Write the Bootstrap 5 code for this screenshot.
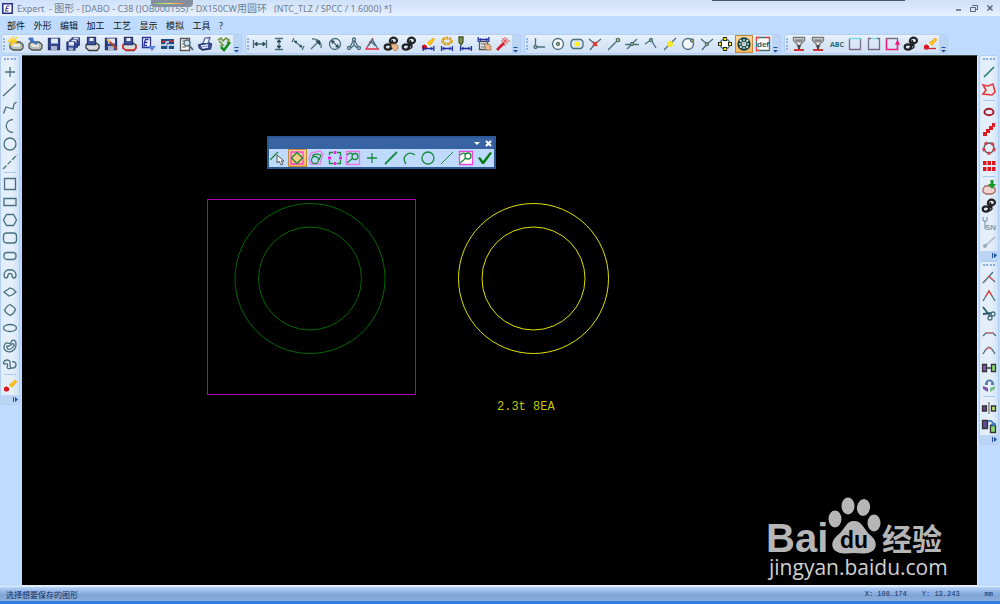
<!DOCTYPE html>
<html lang="zh-CN">
<head>
<meta charset="utf-8">
<meta name="viewport" content="width=device-width, initial-scale=1">
<title>Expert - 图形</title>
<link href="https://cdn.jsdelivr.net/npm/bootstrap@5.3.0/dist/css/bootstrap.min.css" rel="stylesheet">
<style>
  body { font-family: "Noto Sans", "Noto Sans CJK SC", sans-serif; font-size: 9px; line-height: 12px; background: #bfdbff; overflow: hidden; }
  button { border: 0; background: none; padding: 0; color: inherit; }
  .titlebar { height: 16px; font-size: 9px; line-height: 16px; color: #6f7f92; padding-left: 2px; gap: 4px; background: linear-gradient(#cfe1f9, #d9e8fc 50%, #e7f1fe); }
  .titlebar b { font-weight: 400; font-size: 10px; }
  .app-icon { width: 11px; height: 11px; }
  .recorder { left: 151px; top: 0; width: 42px; height: 7px; background: #84909c; border-radius: 0 0 4px 4px; }
  .recorder i { display: block; height: 1px; margin: 3px 10px 0 4px; background: linear-gradient(90deg, #6fdc6c, #ece46e, #f8784c); }
  .edge { right: 95px; top: 0; width: 193px; height: 1px; background: #4c5566; }
  .win-btn { width: 12px; height: 14px; }
  .win-btn svg { width: 8px; height: 8px; display: block; margin: auto; fill: none; stroke: #56657a; }
  .menus { height: 18px; margin-left: 7px; width: 230px; }
  .menus a { color: #101820; font-size: 9px; line-height: 20px; min-width: 18px; text-decoration: none; white-space: nowrap; }
  .bars { height: 21px; padding: 0 0 1px 1px; gap: 3px; }
  .strip { display: flex; border: 1px solid #b4cff2; border-radius: 3px; background: linear-gradient(#e9f2fc, #d8e6f7 50%, #d3e2f6); }
  .strip.horiz { height: 20px; }
  .strip.vert { flex-direction: column; background: linear-gradient(90deg, #e2edfb, #e6f0fa 60%, #cde3f8); width: 20px; }
  .grip { flex: none; }
  .horiz > .grip { width: 4px; margin: 3px 0 3px 1px; border-left: 2px dotted #8fb3e4; }
  .vert > .grip { height: 5px; margin: 2px 3px 0; border-top: 2px dotted #86aae0; }
  .cap { flex: none; background: #bdd5f5; color: #1e4f9a; display: flex; align-items: end; justify-content: center; }
  .horiz > .cap { width: 8px; }
  .vert > .cap { height: 9px; align-items: center; justify-content: end; }
  .cap svg { width: 7px; height: 7px; fill: currentColor; stroke: currentColor; stroke-width: 1; }
  .split { height: 1px; margin: 1px 3px 2px; background: #a9c9f5; }
  .tool { flex: 1 1 0; min-width: 0; display: flex; align-items: center; justify-content: center; }
  .vert .tool { flex: none; height: 18px; }
  .tool svg { flex: none; width: 16px; height: 16px; fill: none; stroke: #4a7080; stroke-width: 1.3; }
  .tool.picked { background: linear-gradient(#fbd9a0, #f7b757); box-shadow: inset 0 0 0 1px #c08a3e; }
  .w1 { width: 241px; } .w2 { width: 276px; } .w3 { width: 257px; } .w4 { width: 164px; }
  .canvas { background: #000; border-top: 1px solid #444a44; border-right: 1px solid #e8ecef; border-bottom: 1px solid #e8ecef; margin: 0 1px 0 2px; }
  .right-dock { margin-right: 1px; }
  .drawing { left: 0; top: 0; width: 600px; height: 400px; }
  .drawing text { font: 12px "Liberation Mono", monospace; fill: #c4c400; }
  .palette { left: 245px; top: 80px; width: 229px; border: 2px solid #2d5896; background: #bfdaff; }
  .palette-head { height: 11px; background: #3763a3; gap: 4px; padding-right: 2px; }
  .palette-head svg { width: 7px; height: 7px; display: block; fill: #fff; stroke: #fff; stroke-width: 0; }
  .palette .tool { height: 18px; }
  .palette .tool svg { stroke: #1c8a3c; }
  .watermark { right: 22px; bottom: 2px; width: 190px; height: 92px; fill: #b6b6b6; }
  .logo-latin { font: bold 40px "Liberation Sans", sans-serif; }
  .logo-du { font: bold 23px "Liberation Sans", sans-serif; fill: #000; }
  .logo-cjk { font: bold 30px "Noto Sans CJK SC", sans-serif; }
  .logo-url { font: 21px "Open Sans", sans-serif; fill: #d0d0d0; }
  .status { height: 18px; border-bottom: 3px solid #327de0; border-top: 1px solid #dcecff; background: linear-gradient(#b7d3f8, #8cb1e3 40%, #7fa4d4 60%, #8db0dd); font-size: 8px; line-height: 15px; color: #0f2f6b; padding: 0 7px 0 6px; }
  .readout { font: 7px/15px "Liberation Mono", monospace; gap: 15px; }
  .unit { padding-left: 10px; }
</style>
</head>
<body class="d-flex flex-column vh-100">

<svg width="0" height="0" class="position-absolute" aria-hidden="true">
  <symbol id="gears" viewBox="0 0 16 16"><g fill="none" stroke="#222"><ellipse cx="10.500" cy="4.500" rx="3.500" ry="2.800" stroke-width="2.200"/><ellipse cx="5" cy="11" rx="3.300" ry="2.600" stroke-width="2.200"/><path d="M6 5l4 5M9 4l2 5M6 12c6 2 6-3 3-4" stroke-width="1.500"/></g></symbol>
  <symbol id="disk" viewBox="0 0 16 16"><path d="M2.500 2.500h11v11h-11z" fill="#32468f" stroke="#24336f"/><path d="M5 2.500h7v5H5z" fill="#dfe7f5" stroke="none"/><path d="M5 10h6v4H5z" fill="#a9b4c7" stroke="none"/></symbol>
  <symbol id="box" viewBox="0 0 16 16"><path d="M2 8l2-2h8l3 2.500V12l-2 2H5l-3-2z" fill="#b9bdba" stroke="#4e5554"/><path d="M4 8h8v3H5z" fill="#e3e5da" stroke="none"/></symbol>
  <symbol id="part" viewBox="0 0 16 16"><path d="M2 9l2-2h8l3 2v3l-2 2.500H5L2 12z" fill="#d9ddd9" stroke="#343b3f"/><path d="M3.500 1.500h8v7h-8z" fill="#43569c" stroke="#28376f"/><path d="M5.500 2h4v3h-4z" fill="#eee" stroke="none"/></symbol>
  <symbol id="dim" viewBox="0 0 16 6"><path d="M1.500 0v6M14.500 0v6M3 3h10" stroke="#1f2fa0" stroke-width="1.600" fill="none"/><path d="M2 3l3-2v4zM14 3l-3-2v4z" fill="#1f2fa0" stroke="none"/></symbol>
  <symbol id="eraser" viewBox="0 0 16 16"><path d="M6 8l7-6 2 1.500-6 7z" fill="#ffc21a" stroke="#e79a12" stroke-width=".6"/><path d="M5.500 7.500l4 3.500" stroke="#fff" stroke-width="2"/><circle cx="4.500" cy="11" r="2.600" fill="#e0151c" stroke="none"/></symbol>
  <symbol id="nozzle" viewBox="0 0 16 16"><path d="M2.500 1.500h11v3l-4 4v2h-3v-2l-4-4z" fill="#e4e4e4" stroke="#777"/><path d="M4 4h8M5 5.500h6" stroke="#888"/><path d="M8 9v4" stroke="#444" stroke-width="2"/><path d="M3 14h10" stroke="#d42020" stroke-width="1.800"/></symbol>
  <symbol id="more-h" viewBox="0 0 7 7"><path d="M1.500 1.500h4"/><path d="M1 4h5L3.500 6.500z" stroke="none"/></symbol>
  <symbol id="more-v" viewBox="0 0 7 7"><path d="M1.500 1v5"/><path d="M3 1l3 2.500L3 6z" stroke="none"/></symbol>
</svg>

<header>
  <div class="titlebar d-flex align-items-center position-relative">
    <svg class="app-icon" viewBox="0 0 11 11"><path d="M.8.800h9.400v9.400H.8z" fill="#fff" stroke="#252e80" stroke-width="1.500"/><path d="M7.500 3H5L4 5.500h2.500M4 5.500L3.500 8h3" fill="none" stroke="#3f3da0"/></svg>
    <span class="flex-grow-1 text-nowrap">Expert &nbsp;- <b>图形</b> - [DABO - C38 (JOB000155) - DX150CW<b>用圆环</b> &nbsp;&nbsp;(NTC_TLZ / SPCC / 1.6000) *]</span>
    <button class="win-btn" aria-label="最小化"><svg viewBox="0 0 8 8"><path d="M2 6h5" stroke-width="1.500"/></svg></button>
    <button class="win-btn" aria-label="还原"><svg viewBox="0 0 8 8"><path d="M2.500 2V1.500h5v4H6M.5 3.500h5v4h-5z"/></svg></button>
    <button class="win-btn me-1" aria-label="关闭"><svg viewBox="0 0 8 8"><path d="M1.500 1.500l5 5m0-5l-5 5" stroke-width="1.500"/></svg></button>
    <div class="recorder position-absolute"><i></i></div>
    <div class="edge position-absolute"></div>
  </div>
  <nav class="menus d-flex justify-content-between" aria-label="菜单">
    <a href="#">部件</a><a href="#">外形</a><a href="#">编辑</a><a href="#">加工</a><a href="#">工艺</a><a href="#">显示</a><a href="#">模拟</a><a href="#">工具</a><a href="#">?</a>
  </nav>
  <div class="bars d-flex">
    <div class="strip horiz w1" role="toolbar" aria-label="文件">
      <span class="grip"></span>
      <button class="tool" aria-label="新建"><svg><use href="#box"/><path d="M1 2l8 6M9 1L2 9M5 0v9M0 5h9" stroke="#ffd21e"/></svg></button>
      <button class="tool" aria-label="打开"><svg><use href="#box"/><path d="M2 2l2 2 2-2M4 4l6 4" stroke="#3b74c4" stroke-width="2.500"/></svg></button>
      <button class="tool" aria-label="保存"><svg><use href="#disk"/></svg></button>
      <button class="tool" aria-label="全部保存"><svg><g transform="translate(5 0) scale(.7)"><use href="#disk" width="16" height="16"/></g><g transform="translate(3 2) scale(.7)"><use href="#disk" width="16" height="16"/></g><g transform="translate(0 4) scale(.75)"><use href="#disk" width="16" height="16"/></g></svg></button>
      <button class="tool" aria-label="保存部件"><svg><use href="#part"/></svg></button>
      <button class="tool" aria-label="保存图形"><svg><use href="#disk"/><path d="M5 4l9 9" stroke="#b5462a" stroke-width="2"/><path d="M4 3l3 3" stroke="#f2c25c" stroke-width="2"/></svg></button>
      <button class="tool" aria-label="另存部件"><svg><use href="#part"/><path d="M2 8v4l3 2h8l2-2V9" stroke="#e63232" stroke-width="1.500"/></svg></button>
      <button class="tool" aria-label="转换"><svg><path d="M2.500 1.500h8v10h-8z" fill="#f3f6ff" stroke="#27359a"/><path d="M8.500 3.500h-3l-1 3h3m-3 0l-.5 3h3" stroke="#27359a"/><path d="M8 10h8l-4 5z" fill="#5d83d8" stroke="none"/></svg></button>
      <button class="tool" aria-label="排版"><svg><path d="M2 3h13v10H2z" fill="#1d4f86" stroke="none"/><path d="M2 9h5V6h3M9 13V9h6" stroke="#e8f0fa"/><path d="M3 5.500h4M10 5h5" stroke="#e02a2a" stroke-width="1.500"/></svg></button>
      <button class="tool" aria-label="预览"><svg><path d="M2.500 2.500h9v12h-9z" fill="#fff" stroke="#555"/><path d="M4 5h3M4 8h2M4 11h4" stroke="#999"/><circle cx="9" cy="7" r="3" fill="#cfe4ee" stroke="#586e7a"/><path d="M11 9l4 5" stroke="#586e7a" stroke-width="2"/></svg></button>
      <button class="tool" aria-label="打印"><svg><path d="M1.500 9l9-3 4 2-1 5-8 1-3-2z" fill="#455796" stroke="#27346c"/><path d="M6 7l2-5 5-.5L11 7" fill="#eef3fc" stroke="#5a6aa6"/><path d="M4 10l7-1M5 12l6-1" stroke="#dbe4f6"/></svg></button>
      <button class="tool" aria-label="检查"><svg><path d="M2 4l3-2 2 3 3-3 3 2-2 3M3 5l4 4-3 1" stroke="#71943d" stroke-width="1.600"/><path d="M5 11l3 3 6-8" stroke="#168c1c" stroke-width="2.500"/></svg></button>
      <button class="cap" aria-label="更多"><svg><use href="#more-h"/></svg></button>
    </div>
    <div class="strip horiz w2" role="toolbar" aria-label="尺寸">
      <span class="grip"></span>
      <button class="tool" aria-label="水平尺寸"><svg><path d="M1.500 4v8M14.500 4v8M3 8h10"/><path d="M5 6v4L2.500 8zM11 6v4l2.500-2z" fill="#274754" stroke="#274754" stroke-width=".8"/></svg></button>
      <button class="tool" aria-label="垂直尺寸"><svg><path d="M4 2.500h8M4 13.500h8M8 4v8"/><path d="M6 6h4L8 3.500zM6 10h4l-2 2.500z" fill="#274754" stroke="#274754" stroke-width=".8"/></svg></button>
      <button class="tool" aria-label="平行尺寸"><svg><path d="M4 2L2 6M14 10l-2 4M4 5l8 6"/><path d="M4 4.500l3.500.5-2 2.500zM12.500 11.500L9 11l2-2.500z" fill="#274754" stroke="none"/></svg></button>
      <button class="tool" aria-label="半径"><svg><path d="M4 3c6-1 10 4 9 9M3 13l8-8"/><path d="M7 4.500h5v5z" fill="#274754" stroke="none"/></svg></button>
      <button class="tool" aria-label="直径"><svg><circle cx="8" cy="8" r="5.500"/><path d="M5 5l6 6"/><path d="M4 4l4 1-3 3zM12 12l-1-4-3 3z" fill="#274754" stroke="none"/></svg></button>
      <button class="tool" aria-label="圆弧尺寸"><svg><circle cx="8" cy="3.500" r="1.500"/><circle cx="3" cy="12" r="1.500"/><circle cx="13" cy="12" r="1.500"/><path d="M8 5v4M7 5L4 11M9 5l3 6M5 12l3-3 3 3"/></svg></button>
      <button class="tool" aria-label="角度"><svg><path d="M8 3l6 10M5 6c3 0 5 1 6 4"/><path d="M9 2L2 13h13" stroke="#e33046"/><path d="M4 10L9 3"/></svg></button>
      <button class="tool" aria-label="拾取属性"><svg><use href="#gears"/><path d="M8 8h5l2 2v3l-3 2-3-3z" fill="#e9b98c" stroke="#9b6a43" stroke-width=".7"/></svg></button>
      <button class="tool" aria-label="属性"><svg><use href="#gears"/></svg></button>
      <button class="tool" aria-label="删除尺寸"><svg><use href="#eraser"/><use href="#dim" x="2" y="10" width="13" height="5"/></svg></button>
      <button class="tool" aria-label="尺寸设置"><svg><ellipse cx="8" cy="5" rx="4.500" ry="3" stroke="#dba21d" stroke-width="2.800" stroke-dasharray="2.500 .7"/><use href="#dim" x="1" y="10" width="14" height="5"/></svg></button>
      <button class="tool" aria-label="编辑尺寸"><svg><path d="M2 1h4v5L4 9 2 6z" fill="#7b9848" stroke="#46552f"/><use href="#dim" x="2" y="10" width="14" height="5"/></svg></button>
      <button class="tool" aria-label="移动尺寸"><svg><path d="M3.500 5.500h8v8h-8z" fill="#eee" stroke="#555"/><path d="M5 8h5M5 11h5" stroke-width="1"/><use href="#dim" x="1" y="1" width="13" height="5"/><path d="M8 8h5l2 2v4h-5z" fill="#e9b98c" stroke="#9b6a43" stroke-width=".7"/></svg></button>
      <button class="tool" aria-label="自动尺寸"><svg><path d="M2 14L9 7" stroke="#d51c2a" stroke-width="2.600"/><path d="M10 1v9M6 5h9M7 2l6 6M13 2L8 7" stroke="#ef5454" stroke-width="1"/></svg></button>
      <button class="cap" aria-label="更多"><svg><use href="#more-h"/></svg></button>
    </div>
    <div class="strip horiz w3" role="toolbar" aria-label="捕捉">
      <span class="grip"></span>
      <button class="tool" aria-label="原点"><svg><path d="M4.500 2v9H14"/><circle cx="4.500" cy="11" r="1.500" fill="#d9d33a"/></svg></button>
      <button class="tool" aria-label="圆心"><svg><circle cx="8" cy="8" r="5.500" fill="#f4f7f8"/><circle cx="8" cy="8" r="1.500" fill="#d9d33a"/></svg></button>
      <button class="tool" aria-label="中心"><svg><path d="M4 3.500h8l2 2v5l-2 2H4l-2-2v-5z"/><circle cx="8" cy="8" r="2.500" fill="#ffee22" stroke="none"/></svg></button>
      <button class="tool" aria-label="交点"><svg><path d="M2 3l6 5 6-5M8 8l-5 6"/><path d="M6 6l4 4M10 6l-4 4" stroke="#dc3328" stroke-width="1.800"/></svg></button>
      <button class="tool" aria-label="端点"><svg><path d="M2 14L12 4"/><circle cx="12" cy="4" r="1.700" fill="#d9d33a"/></svg></button>
      <button class="tool" aria-label="最近点"><svg><path d="M3 13L13 3M1 8.500h14"/><circle cx="8" cy="8" r="1.500" fill="#d9d33a"/></svg></button>
      <button class="tool" aria-label="顶点"><svg><path d="M2 8l6-4 5 8"/><circle cx="8" cy="4" r="1.500" fill="#d9d33a"/></svg></button>
      <button class="tool" aria-label="中点"><svg><path d="M2 14L14 2"/><circle cx="8" cy="8" r="3" fill="#f5e62c" stroke="none"/></svg></button>
      <button class="tool" aria-label="象限点"><svg><circle cx="8" cy="8" r="5.500" fill="#f4f7f8"/><circle cx="12" cy="4.500" r="1.500" fill="#d9d33a"/></svg></button>
      <button class="tool" aria-label="切点"><svg><path d="M2 3l6 5 6-5M8 8l-5 6"/><circle cx="8" cy="8" r="1.500" fill="#d9d33a"/></svg></button>
      <button class="tool" aria-label="四分点"><svg><circle cx="8" cy="8" r="5" fill="#fff"/><path d="M8 1v4M8 11v4M1 8h4M11 8h4" stroke="#222" stroke-width="4"/><path d="M8 2v2M8 12v2M2 8h2M12 8h2" stroke="#ffe600" stroke-width="2.500"/></svg></button>
      <button class="tool picked" aria-label="自动捕捉"><svg><circle cx="8" cy="8" r="6" fill="#1d4d52" stroke="#163c43"/><path d="M4 4l8 8M12 4l-8 8" stroke="#dfe8dd" stroke-width="2" stroke-dasharray="2 1"/><path d="M8 3v2M8 11v2M3 8h2M11 8h2" stroke="#8db3ac" stroke-width="2"/></svg></button>
      <button class="tool" aria-label="默认"><svg><path d="M1.500 1.500h13v13h-13z" fill="#fff" stroke="#496e70"/><path d="M1.500 5V1.500H5M11 1.500h3.500V5M1.500 11v3.500H5" stroke="#ef4f4f"/><text x="2" y="11" font-family="Liberation Sans, sans-serif" font-size="8" font-weight="bold" fill="#255c60" stroke="none">def</text></svg></button>
      <button class="cap" aria-label="更多"><svg><use href="#more-h"/></svg></button>
    </div>
    <div class="strip horiz w4" role="toolbar" aria-label="加工">
      <span class="grip"></span>
      <button class="tool" aria-label="切割"><svg><use href="#nozzle"/></svg></button>
      <button class="tool" aria-label="单点切割"><svg><use href="#nozzle"/></svg></button>
      <button class="tool" aria-label="文字"><svg><text x="1" y="11" font-family="Open Sans, sans-serif" font-size="7" font-weight="bold" fill="#276a74" stroke="none">ABC</text></svg></button>
      <button class="tool" aria-label="闭合轮廓"><svg><path d="M2.500 2.500v11h11v-11" stroke="#756c86"/><path d="M2 2.500h12" stroke="#69d9e5"/></svg></button>
      <button class="tool" aria-label="开口轮廓"><svg><path d="M5 2.500H2.500v11h11v-11H11" stroke="#756c86"/><path d="M5 2.500h6" stroke="#69d9e5"/></svg></button>
      <button class="tool" aria-label="引入线"><svg><path d="M2.500 2.500v11h11v-7" stroke="#f01c83" stroke-width="1.600"/><path d="M2 2.500h11.500V6" stroke="#756c86"/><path d="M12 8l1.500-3L15 8z" fill="#f01c83" stroke="#f01c83"/></svg></button>
      <button class="tool" aria-label="参数"><svg><use href="#gears"/></svg></button>
      <button class="tool" aria-label="删除加工"><svg><use href="#eraser"/><path d="M2 12.500h12" stroke="#d22b34"/></svg></button>
      <button class="cap" aria-label="更多"><svg><use href="#more-h"/></svg></button>
    </div>
  </div>
</header>

<main class="d-flex flex-grow-1 overflow-hidden">
  <aside>
    <div class="strip vert" role="toolbar" aria-label="绘图">
      <span class="grip"></span>
      <button class="tool" aria-label="点"><svg><path d="M8 3v10M3 8h10"/></svg></button>
      <button class="tool" aria-label="直线"><svg><path d="M1 14L14 2"/></svg></button>
      <button class="tool" aria-label="折线"><svg><path d="M1.500 13.500L4 7l7 2 1-5 2.500-2"/></svg></button>
      <button class="tool" aria-label="圆弧"><svg><path d="M11 1.500c-9 1-9 12 0 13"/></svg></button>
      <button class="tool" aria-label="圆"><svg><circle cx="8" cy="8" r="6"/></svg></button>
      <button class="tool" aria-label="构造线"><svg><path d="M1 15L15 1" stroke-dasharray="5 1.500"/></svg></button>
      <div class="split"></div>
      <button class="tool" aria-label="正方形"><svg><path d="M2.500 2.500h11v11h-11z"/></svg></button>
      <button class="tool" aria-label="矩形"><svg><path d="M2 4.500h12v7H2z"/></svg></button>
      <button class="tool" aria-label="六边形"><svg><path d="M4.500 2.500h7l3 5.500-3 5.500h-7L1.500 8z"/></svg></button>
      <button class="tool" aria-label="圆角矩形"><svg><rect x="1.500" y="3" width="13" height="10" rx="3"/></svg></button>
      <button class="tool" aria-label="键槽"><svg><rect x="2" y="4.500" width="12" height="7" rx="3"/></svg></button>
      <button class="tool" aria-label="弧形槽"><svg><path d="M2 9c0-7 12-7 12 0 0 4-4 4-4 0 0-2-4-2-4 0 0 4-4 4-4 0z"/></svg></button>
      <button class="tool" aria-label="菱形"><svg><path d="M2 8l6-4 3 1 3 3-4 3-3 1z"/></svg></button>
      <button class="tool" aria-label="圆孔"><svg><path d="M8 2.500c1 1 1 1 3 2 2 1 2 2 2.500 3.500-1 1-1 1-2 3-1 1-2 2-3.500 2.500-1-1-1-1-3-2-1-1-2-2-2.500-3.500 1-1 1-1 2-3 1-1 2-2 3.500-2.500z"/></svg></button>
      <button class="tool" aria-label="椭圆"><svg><ellipse cx="8" cy="8" rx="6.500" ry="3.500"/></svg></button>
      <button class="tool" aria-label="轮廓"><svg><path d="M3 6c2-3 3 1 6-1 0-4 5-4 5 1 0 7-7 10-11 6-2-2-1-4 0-6z"/><path d="M5 8c2 1 3 0 5-2 2-1 3 1 1 3-2 3-5 3-6 1z"/></svg></button>
      <button class="tool" aria-label="样条"><svg><path d="M3 8c-3 0-1-4 2-4 4 0 3 3 3 5 0 5 6 3 6 0 0-2-1-4-4-3M3 8c3-1 3 1 2 3 0 2 3 2 4 1"/></svg></button>
      <div class="split"></div>
      <button class="tool" aria-label="擦除"><svg><use href="#eraser"/></svg></button>
      <button class="cap" aria-label="更多"><svg><use href="#more-v"/></svg></button>
    </div>
  </aside>

  <section class="canvas flex-grow-1 position-relative overflow-hidden" aria-label="图形">
    <svg class="drawing position-absolute">
      <rect x="185.500" y="143.500" width="208" height="195" fill="none" stroke="#b000b0"/>
      <g fill="none" stroke="#006a00"><circle cx="288" cy="222.500" r="75"/><circle cx="288" cy="222.500" r="51.500"/></g>
      <g fill="none" stroke="#e0e000"><circle cx="511.500" cy="222.500" r="75"/><circle cx="511.500" cy="222.500" r="51.500"/></g>
      <text x="475" y="354">2.3t 8EA</text>
    </svg>

    <div class="palette position-absolute" role="toolbar" aria-label="选择">
      <div class="palette-head d-flex align-items-center justify-content-end">
        <button aria-label="选项"><svg viewBox="0 0 7 7"><path d="M0 2h6L3 5z"/></svg></button>
        <button aria-label="关闭"><svg viewBox="0 0 7 7"><path d="M1 1l5 5m0-5L1 6" stroke-width="2"/></svg></button>
      </div>
      <div class="d-flex">
        <button class="tool" aria-label="选择线"><svg><path d="M0 10L8 2"/><path d="M7 5v8l2-2 2 4 2-1-2-3h3z" fill="#fff" stroke="#555" stroke-width="1"/></svg></button>
        <button class="tool picked" aria-label="窗口选择"><svg><path d="M2 2h12v12H2z" stroke="#f044d8"/><path d="M8 2.500L13.500 8 8 13.500 2.500 8z" fill="#f9cd85"/></svg></button>
        <button class="tool" aria-label="多边形选择"><svg><path d="M3 3l9-2 3 3-3 10H3L1 9z" stroke="#e67de8"/><circle cx="7" cy="10" r="3.500"/><path d="M4 6c3-3 6-2 9-1l-2 5"/></svg></button>
        <button class="tool" aria-label="交叉选择"><svg><path d="M2.500 5V2.500H6M10 2.500h3.500V6M13.500 10v3.500H10M6 13.500H2.500V10"/><path d="M8 1v3M8 12v3M1 8h3M12 8h3" stroke="#ee24de" stroke-width="2.800"/></svg></button>
        <button class="tool" aria-label="框选圆"><svg><path d="M1.500 1.500h13v13h-13z" stroke="#ea78e9"/><circle cx="10" cy="6.500" r="3"/><path d="M2 13l6-5M2 5c3-3 5-2 6 0"/></svg></button>
        <button class="tool" aria-label="选择点"><svg><path d="M8 3v10M3 8h10"/></svg></button>
        <button class="tool" aria-label="选择直线"><svg><path d="M2 14L14 2" stroke-width="1.800"/></svg></button>
        <button class="tool" aria-label="选择圆弧"><svg><path d="M4 14C-1 7 6 0 13 5"/></svg></button>
        <button class="tool" aria-label="选择圆"><svg><circle cx="8" cy="8" r="6"/></svg></button>
        <button class="tool" aria-label="选择构造线"><svg><path d="M2 14L14 2" stroke-width="1"/></svg></button>
        <button class="tool" aria-label="全选"><svg><path d="M1.500 1.500h13v13h-13z" fill="#fff" stroke="#ee44e0"/><circle cx="10" cy="6" r="3"/><path d="M2 13l6-5M2 5c3-3 5-2 6 0"/></svg></button>
        <button class="tool" aria-label="确定"><svg><path d="M1 8l2-1 3 4 7-9 2 1L7 14H5z" fill="#047d16" stroke="none"/></svg></button>
      </div>
    </div>

    <svg class="watermark position-absolute" role="img" aria-label="Baidu 经验">
      <text class="logo-latin" x="1" y="61">Bai</text>
      <ellipse cx="70" cy="28" rx="6.500" ry="8.500"/><ellipse cx="83" cy="15" rx="6.500" ry="8.500"/><ellipse cx="98.500" cy="16.500" rx="6.500" ry="8.500" transform="rotate(10 98.500 16.500)"/><ellipse cx="109" cy="32" rx="6.500" ry="8.500"/>
      <path d="M89 30c8 0 10 8 15 13 6 5 8 9 6 14-3 6-11 6-21 5-9 1-18 1-21-5-2-5 0-9 6-14 6-5 7-13 15-13z"/>
      <text class="logo-du" x="75" y="57">du</text>
      <text class="logo-cjk" x="117" y="59">经验</text>
      <text class="logo-url" x="4" y="84">jingyan.baidu.com</text>
    </svg>
  </section>

  <aside class="right-dock">
    <div class="strip vert" role="toolbar" aria-label="阵列">
      <span class="grip"></span>
      <button class="tool" aria-label="参考线"><svg><path d="M3 13L13 3" stroke="#267a70" stroke-width="1.600"/></svg></button>
      <button class="tool" aria-label="板材"><svg><path d="M2 3l5 1 5-2 2 8-3 3-9-1 3-4z" fill="#ece9ea" stroke="#df3a42" stroke-width="1.600"/></svg></button>
      <div class="split"></div>
      <button class="tool" aria-label="椭圆孔"><svg><ellipse cx="8" cy="8" rx="4.500" ry="3.200" stroke="#a61d2a" stroke-width="2"/></svg></button>
      <button class="tool" aria-label="斜向阵列"><svg><path d="M2 12h4M5 9h4M8 6h4M11 3h3" stroke="#e01b24" stroke-width="4"/></svg></button>
      <button class="tool" aria-label="圆周阵列"><svg><circle cx="8" cy="8" r="5" stroke="#555"/><circle cx="8" cy="8" r="5.300" stroke="#cf4550" stroke-width="3" stroke-dasharray="3 3.600"/></svg></button>
      <button class="tool" aria-label="矩形阵列"><svg><path d="M2 5h3.500M6.500 5H10M11 5h3.500M2 11h3.500M6.500 11H10M11 11h3.500" stroke="#db1620" stroke-width="4"/></svg></button>
      <div class="split"></div>
      <button class="tool" aria-label="导入"><svg><path d="M2 9l2-3h8l2 3v3l-3 2H5l-3-2z" fill="#eed3ce" stroke="#a86b66"/><path d="M9.500 0h3v4h2.500l-4 5-4-5h2.500z" fill="#159b28" stroke="none"/></svg></button>
      <button class="tool" aria-label="属性"><svg><use href="#gears"/></svg></button>
      <button class="tool" aria-label="序列号"><svg><path d="M2 1v3l2 2 2-2V1M4 6v7" stroke="#8aa2ba"/><text x="4" y="14" font-family="Liberation Sans, sans-serif" font-size="8" font-weight="bold" fill="#8299b2" stroke="none">SN</text></svg></button>
      <button class="tool" aria-label="刷新属性"><svg><path d="M4 12L14 3" stroke="#b6c3d1" stroke-width="2"/><circle cx="4" cy="12" r="2" fill="#9baaba" stroke="none"/></svg></button>
      <button class="cap" aria-label="更多"><svg><use href="#more-v"/></svg></button>
    </div>
    <div class="strip vert" role="toolbar" aria-label="修改">
      <span class="grip"></span>
      <button class="tool" aria-label="延伸"><svg><path d="M2 13L12 2M8 6l6 6"/><path d="M7 6l5 4" stroke="#e75b66"/></svg></button>
      <button class="tool" aria-label="尖角"><svg><path d="M2 13l6-10 6 10"/><path d="M5 8l3-5 3 5" stroke="#ef4038"/></svg></button>
      <button class="tool" aria-label="剪切"><svg><path d="M2 1l7 9M2 8l9-1" stroke="#285a66" stroke-width="1.800"/><circle cx="12" cy="8" r="2"/><circle cx="9" cy="12" r="2"/></svg></button>
      <button class="tool" aria-label="倒角"><svg><path d="M2 12l3-3h7l3 3"/><path d="M5 9h7" stroke="#e38188"/></svg></button>
      <button class="tool" aria-label="圆角"><svg><path d="M2 12c5-9 7-9 12 0"/><path d="M5 8c2-3 4-3 6 0" stroke="#d97980"/></svg></button>
      <button class="tool" aria-label="移动"><svg><path d="M1.500 4.500h4v7h-4z" fill="#8357b8" stroke="#333"/><path d="M10.500 4.500h4v7h-4z" fill="#8bdc70" stroke="#333"/><path d="M6 8h4" stroke="#222"/></svg></button>
      <button class="tool" aria-label="旋转"><svg><path d="M5 7c0-6 7-6 7 0M4 6h3M10 6h3" stroke="#587ba8" stroke-width="2"/><path d="M2 8l5 2v4l-5-3z" fill="#7958a8" stroke="none"/><path d="M14 8l-5 2v4l5-3z" fill="#79bd8f" stroke="none"/></svg></button>
      <div class="split"></div>
      <button class="tool" aria-label="镜像"><svg><path d="M1.500 6h4v5h-4z" fill="#6d3da7" stroke="#333"/><path d="M10.500 6h4v5h-4z" fill="#b9e66f" stroke="#333"/><path d="M8 2v12" stroke="#777"/></svg></button>
      <button class="tool" aria-label="复制"><svg><path d="M1.500 2.500h5v8h-5z" fill="#5f4a9b" stroke="#333"/><path d="M9.500 7.500h5v7h-5z" fill="#8bdc70" stroke="#333"/><path d="M7 3c4-1 5 1 6 4M13 8l-3-2M13 8l1-3" stroke="#3974b9" stroke-width="1.800"/></svg></button>
      <button class="cap" aria-label="更多"><svg><use href="#more-v"/></svg></button>
    </div>
  </aside>
</main>

<footer class="status d-flex justify-content-between">
  <span>选择想要保存的图形</span>
  <div class="readout d-flex"><span>X: 108.174</span><span>Y: 13.243</span><span class="unit">mm</span></div>
</footer>

<script src="https://cdn.jsdelivr.net/npm/bootstrap@5.3.0/dist/js/bootstrap.bundle.min.js"></script>
</body>
</html>
